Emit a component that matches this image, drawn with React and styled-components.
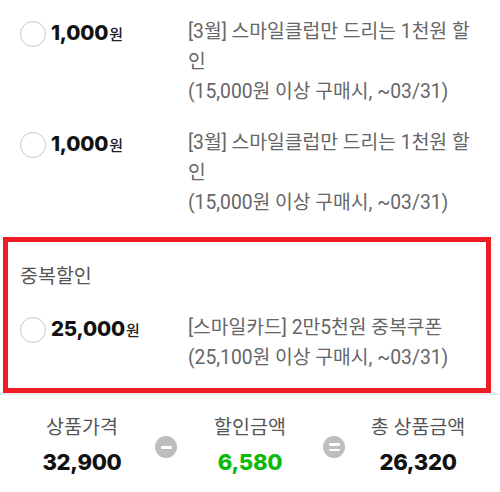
import React from "react";
import styled, { createGlobalStyle } from "styled-components";

const Global = createGlobalStyle`
  html, body { margin: 0; padding: 0; background: #fff; }
  body { width: 500px; font-family: Roboto, "Noto Sans CJK KR", sans-serif; }
`;

const Page = styled.div`
  width: 500px;
  display: flex;
  flex-direction: column;
`;

const List = styled.div`
  display: flex;
  flex-direction: column;
  gap: 21px;
  padding: 17px 0 19px;
`;

const Row = styled.div`
  display: grid;
  grid-template-columns: 168px 1fr;
  padding: 0 16px 0 ${(p) => (p.$inset ? "12px" : "20px")};
`;

const AmountCell = styled.label`
  display: flex;
  align-items: center;
  height: 30px;
  gap: 5px;
`;

const Radio = styled.span`
  box-sizing: border-box;
  width: 26px;
  height: 26px;
  border-radius: 50%;
  border: 1.5px solid #c8c8c8;
  background: #fff;
  margin-top: 4px;
  flex: none;
`;

const Amount = styled.span`
  font-family: Inter, Roboto, "Noto Sans CJK KR", sans-serif;
  font-weight: 800;
  font-size: 20.5px;
  letter-spacing: -0.2px;
  color: #111;
  white-space: nowrap;
`;

const Won = styled.span`
  font-family: "Noto Sans CJK KR", sans-serif;
  font-weight: 500;
  font-size: 15px;
  margin-left: 1px;
  color: #222;
`;

const Desc = styled.div`
  font-size: 19.3px;
  line-height: 30px;
  color: #666;
  word-break: break-all;
`;

const Highlight = styled.section`
  margin: 0 9px 0 3px;
  border: 5px solid #ee1c25;
  padding: 20px 0 15px;
  display: flex;
  flex-direction: column;
  gap: 21px;
`;

const Title = styled.div`
  padding-left: 12px;
  font-size: 19.5px;
  line-height: 30px;
  color: #555;
`;

const Footer = styled.div`
  border-top: 2px solid #ececec;
  display: grid;
  grid-template-columns: 120px 48px 120px 48px 120px;
  justify-content: center;
  align-items: center;
  padding: 21px 0 16px;
`;

const Stat = styled.div`
  display: flex;
  flex-direction: column;
  align-items: center;
  gap: 8px;
`;

const StatLabel = styled.div`
  font-size: 19.5px;
  line-height: 24px;
  color: #555;
  white-space: nowrap;
`;

const StatValue = styled.div`
  font-family: Inter, Roboto, sans-serif;
  font-weight: 800;
  font-size: 22px;
  line-height: 28px;
  letter-spacing: -0.3px;
  color: ${(p) => p.$color || "#111"};
`;

const Op = styled.div`
  justify-self: center;
  margin-top: 2px;
  width: 22px;
  height: 22px;
  border-radius: 50%;
  background: #bdbdbd;
  display: flex;
  flex-direction: column;
  align-items: center;
  justify-content: center;
  gap: 3px;
`;

const Bar = styled.span`
  width: 11px;
  height: ${(p) => (p.$thin ? "2.5px" : "3px")};
  background: #fff;
  border-radius: 1px;
`;

const Coupon = ({ amount, lines, inset }) => (
  <Row $inset={inset}>
    <AmountCell>
      <Radio />
      <Amount>
        {amount}
        <Won>원</Won>
      </Amount>
    </AmountCell>
    <Desc>
      {lines.map((l, i) => (
        <div key={i}>{l}</div>
      ))}
    </Desc>
  </Row>
);

export default function App() {
  return (
    <Page>
      <Global />
      <List>
        <Coupon
          amount="1,000"
          lines={["[3월] 스마일클럽만 드리는 1천원 할인", "(15,000원 이상 구매시, ~03/31)"]}
        />
        <Coupon
          amount="1,000"
          lines={["[3월] 스마일클럽만 드리는 1천원 할인", "(15,000원 이상 구매시, ~03/31)"]}
        />
      </List>
      <Highlight>
        <Title>중복할인</Title>
        <Coupon
          inset
          amount="25,000"
          lines={["[스마일카드] 2만5천원 중복쿠폰", "(25,100원 이상 구매시, ~03/31)"]}
        />
      </Highlight>
      <Footer>
        <Stat>
          <StatLabel>상품가격</StatLabel>
          <StatValue>32,900</StatValue>
        </Stat>
        <Op>
          <Bar />
        </Op>
        <Stat>
          <StatLabel>할인금액</StatLabel>
          <StatValue $color="#0cba0c">6,580</StatValue>
        </Stat>
        <Op>
          <Bar $thin />
          <Bar $thin />
        </Op>
        <Stat>
          <StatLabel>총 상품금액</StatLabel>
          <StatValue>26,320</StatValue>
        </Stat>
      </Footer>
    </Page>
  );
}
